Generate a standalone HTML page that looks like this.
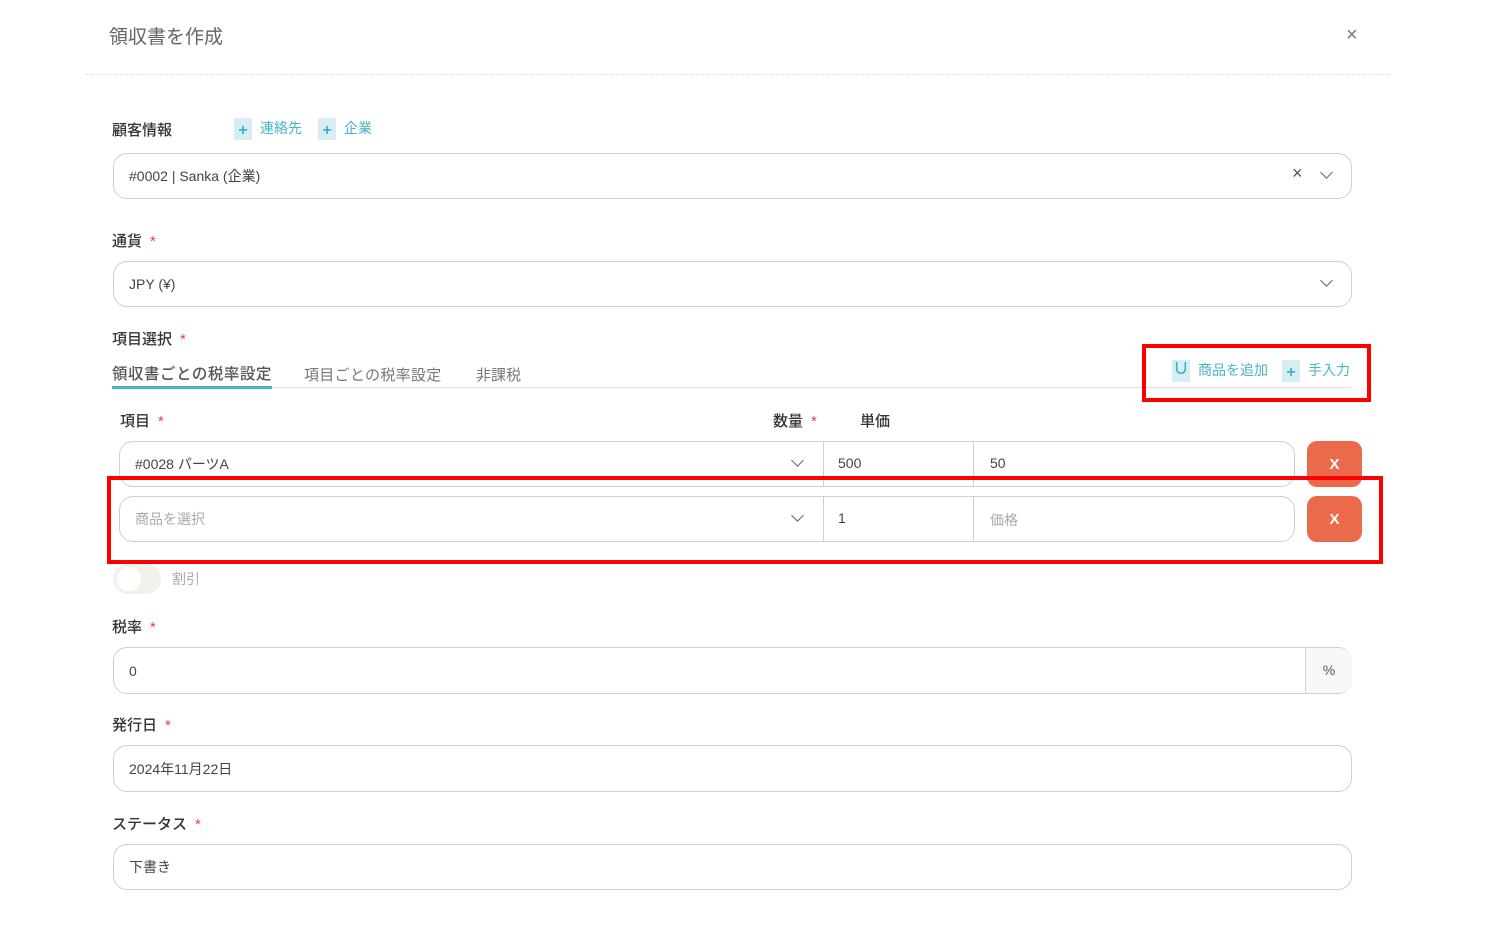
<!DOCTYPE html>
<html><head><meta charset="utf-8"><style>
body{margin:0;width:1500px;height:930px;background:#fff;font-family:"Liberation Sans","Noto Sans CJK JP",sans-serif;position:relative;overflow:hidden;color:#444}
.a{position:absolute}
.lbl{position:absolute;font-size:15px;color:#333;font-weight:500}
.req{color:#e0473a;margin-left:8px}
.inp{position:absolute;border:1.5px solid #cfcfcf;border-radius:14px;box-sizing:border-box;font-size:14px;color:#444;padding-left:15px;display:flex;align-items:center}
.chev{position:absolute;width:8px;height:8px;border-right:1.5px solid #666;border-bottom:1.5px solid #666;transform:rotate(45deg)}
.ic{display:inline-block;width:18px;height:22px;background:#d6eef3;color:#3ab3c9;font-size:16px;text-align:center;line-height:26px;font-weight:bold;vertical-align:middle;margin-right:8px}
.lnk{color:#48b4c8;font-size:14px}
.xb{position:absolute;width:55px;height:46px;background:#ec6a4c;border-radius:10px;color:#fff;font-size:15px;font-weight:bold;display:flex;align-items:center;justify-content:center}
.red{position:absolute;border:4px solid #f00;box-sizing:border-box}
</style></head><body>
<div class="a" style="left:109px;top:22px;font-size:19px;color:#666">領収書を作成</div>
<div class="a" style="left:1346px;top:24px;font-size:20px;color:#777">×</div>
<div class="a" style="left:85px;top:74px;width:1305px;border-top:1px dashed #e3e3e3"></div>

<div class="lbl" style="left:112px;top:119px">顧客情報</div>
<div class="a" style="left:234px;top:118px"><span class="ic">+</span><span class="lnk">連絡先</span></div>
<div class="a" style="left:318px;top:118px"><span class="ic">+</span><span class="lnk">企業</span></div>
<div class="inp" style="left:113px;top:153px;width:1239px;height:46px">#0002 | Sanka (企業)</div>
<div class="a" style="left:1292px;top:163px;font-size:18px;color:#555">×</div>
<div class="chev" style="left:1322px;top:168px"></div>

<div class="lbl" style="left:112px;top:230px">通貨<span class="req">*</span></div>
<div class="inp" style="left:113px;top:261px;width:1239px;height:46px">JPY (¥)</div>
<div class="chev" style="left:1322px;top:276px"></div>

<div class="lbl" style="left:112px;top:328px">項目選択<span class="req">*</span></div>
<div class="a" style="left:113px;top:387px;width:1238px;border-top:1.5px solid #ddd"></div>
<div class="a" style="left:112px;top:362px;font-size:15.5px;color:#555;font-weight:500;border-bottom:3px solid #4ab3c7;padding-bottom:2px;letter-spacing:0.5px">領収書ごとの税率設定</div>
<div class="a" style="left:304px;top:364px;font-size:15px;color:#777;letter-spacing:0.3px">項目ごとの税率設定</div>
<div class="a" style="left:476px;top:364px;font-size:15px;color:#777">非課税</div>
<div class="a" style="left:1172px;top:360px"><span class="ic" style="line-height:20px">∪</span><span class="lnk">商品を追加</span></div>
<div class="a" style="left:1282px;top:360px"><span class="ic">+</span><span class="lnk">手入力</span></div>

<div class="lbl" style="left:120px;top:410px">項目<span class="req">*</span></div>
<div class="lbl" style="left:773px;top:410px">数量<span class="req">*</span></div>
<div class="lbl" style="left:860px;top:410px">単価</div>

<div class="inp" style="left:119px;top:441px;width:1176px;height:46px">#0028 パーツA</div>
<div class="chev" style="left:793px;top:456px"></div>
<div class="a" style="left:823px;top:441px;height:46px;border-left:1.5px solid #cfcfcf"></div>
<div class="a" style="left:973px;top:441px;height:46px;border-left:1.5px solid #cfcfcf"></div>
<div class="a" style="left:838px;top:455px;font-size:14px">500</div>
<div class="a" style="left:990px;top:455px;font-size:14px">50</div>
<div class="xb" style="left:1307px;top:441px">X</div>

<div class="inp" style="left:119px;top:496px;width:1176px;height:46px;color:#aaa">商品を選択</div>
<div class="chev" style="left:793px;top:511px"></div>
<div class="a" style="left:823px;top:496px;height:46px;border-left:1.5px solid #cfcfcf"></div>
<div class="a" style="left:973px;top:496px;height:46px;border-left:1.5px solid #cfcfcf"></div>
<div class="a" style="left:838px;top:510px;font-size:14px">1</div>
<div class="a" style="left:990px;top:510px;font-size:14px;color:#aaa">価格</div>
<div class="xb" style="left:1307px;top:496px">X</div>

<div class="red" style="left:1142px;top:344px;width:229px;height:58px"></div>
<div class="red" style="left:107px;top:476px;width:1276px;height:88px"></div>

<div class="a" style="left:113px;top:564px;width:48px;height:30px;border-radius:15px;background:#f3f1ec"></div>
<div class="a" style="left:117px;top:567px;width:24px;height:24px;border-radius:12px;background:#fff"></div>
<div class="a" style="left:172px;top:569px;font-size:14px;color:#aaa">割引</div>

<div class="lbl" style="left:112px;top:616px">税率<span class="req">*</span></div>
<div class="inp" style="left:113px;top:647px;width:1239px;height:47px">0</div>
<div class="a" style="left:1305px;top:648px;width:46px;height:45px;border-left:1.5px solid #cfcfcf;background:#f8f8f8;border-radius:0 13px 13px 0;font-size:14px;text-align:center;line-height:45px;color:#555">%</div>

<div class="lbl" style="left:112px;top:714px">発行日<span class="req">*</span></div>
<div class="inp" style="left:113px;top:745px;width:1239px;height:47px">2024年11月22日</div>

<div class="lbl" style="left:112px;top:813px">ステータス<span class="req">*</span></div>
<div class="inp" style="left:113px;top:844px;width:1239px;height:46px">下書き</div>
</body></html>
